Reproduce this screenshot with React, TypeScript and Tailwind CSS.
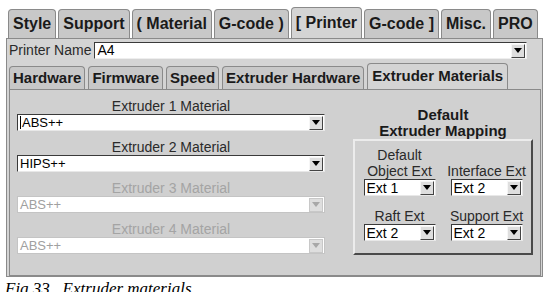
import React from "react";

const topTabs = ["Style", "Support", "( Material", "G-code )", "[ Printer", "G-code ]", "Misc.", "PRO"];
const subTabs = ["Hardware", "Firmware", "Speed", "Extruder Hardware", "Extruder Materials"];

function Arrow({ disabled }: { disabled?: boolean }) {
  return (
    <div
      className={
        "flex h-[14px] w-[14px] items-center justify-center border bg-[#dedede] " +
        (disabled ? "border-[#c8c8c8]" : "border-t-[#f6f6f6] border-l-[#f6f6f6] border-b-[#444] border-r-[#444]")
      }
    >
      <svg width="8" height="5" viewBox="0 0 8 5">
        <path d="M0 0h8L4 5z" fill={disabled ? "#a8a8a8" : "#000"} />
      </svg>
    </div>
  );
}

function Combo({ value, disabled, width, size, caret }: { value: string; disabled?: boolean; width: string; size: string; caret?: boolean }) {
  return (
    <div
      className={
        "flex h-[17px] items-center justify-between bg-white pl-[2px] pr-[1px] " +
        width +
        " " +
        size +
        (disabled
          ? " border border-[#c4c4c4] text-[#a0a0a0]"
          : " border border-t-[#3a3a3a] border-l-[#3a3a3a] border-b-[#e8e8e8] border-r-[#e8e8e8] text-black")
      }
    >
      <span className="flex items-center leading-none">
        {caret && <span className="mr-[1px] h-[13px] w-px bg-black" />}
        {value}
      </span>
      <Arrow disabled={disabled} />
    </div>
  );
}

function Tab({ label, active, big }: { label: string; active?: boolean; big?: boolean }) {
  const size = big
    ? active
      ? " h-[31px] text-[16px] px-[4px]"
      : " h-[29px] text-[16px] px-[4px]"
    : active
      ? " h-[26px] text-[15px] px-[4px]"
      : " h-[23px] text-[15px] px-[3px]";
  return (
    <div
      className={
        "flex items-center rounded-t-[4px] border border-b-0 border-[#8a8a8a] font-bold text-[#1a1a1a]" +
        size +
        (active ? " bg-[#d4d4d4]" : " bg-[#c8c8c8]")
      }
    >
      {label}
    </div>
  );
}

export default function App() {
  return (
    <div className="relative h-[292px] w-[557px] overflow-hidden bg-white font-['Liberation_Sans',Arial,sans-serif]">
      <div className="pl-[6px] pt-[7px]">
        <div className="flex items-end gap-[2px] pl-[2px]">
          {topTabs.map((t) => (
            <Tab key={t} label={t} big active={t === "[ Printer"} />
          ))}
        </div>
        <div className="flex h-[239px] w-[537px] flex-col border border-[#8a8a8a] bg-[#d4d4d4] pl-[2px] pt-[3px]">
          <div className="flex h-[17px] items-center">
            <span className="mr-[3px] text-[14px] text-[#2a2a2a]">Printer Name</span>
            <div className="flex h-[17px] w-[433px] items-center justify-between border border-t-[#3a3a3a] border-l-[#3a3a3a] border-b-[#eee] border-r-[#eee] bg-white pl-[2px] pr-[1px] text-[14px]">
              A4
              <Arrow />
            </div>
          </div>
          <div className="mt-[4px] flex items-end gap-[3px]">
            {subTabs.map((t) => (
              <Tab key={t} label={t} active={t === "Extruder Materials"} />
            ))}
          </div>
          <div className="flex w-[532px] flex-1 border border-[#8a8a8a] bg-[#d0d0d0] pl-[7px] pt-[8px]">
            <div className="flex w-[308px] flex-col">
              {["ABS++", "HIPS++", "ABS++", "ABS++"].map((v, i) => (
                <div key={i} className="mb-[8px] flex flex-col">
                  <div className={"h-[16px] text-center text-[14px] leading-[16px] " + (i > 1 ? "text-[#a4a4a4]" : "text-[#2a2a2a]")}>
                    Extruder {i + 1} Material
                  </div>
                  <Combo value={v} disabled={i > 1} width="w-[308px]" size="text-[13px]" caret={i === 0} />
                </div>
              ))}
            </div>
            <div className="ml-[28px] flex flex-col">
              <div className="mt-[9px] text-center text-[15px] font-bold leading-[16px] text-[#1a1a1a]">
                Default
                <br />
                Extruder Mapping
              </div>
              <div className="grid h-[116px] w-[180px] grid-cols-2 content-start gap-x-[14px] border-2 border-t-[#ececec] border-l-[#ececec] border-b-[#4a4a4a] border-r-[#4a4a4a] pl-[8px] pr-[8px] pt-[6px]">
                <div className="flex flex-col items-center">
                  <div className="text-center text-[14px] leading-[16px] text-[#2a2a2a]">
                    Default
                    <br />
                    Object Ext
                  </div>
                  <Combo value="Ext 1" width="w-[72px]" size="text-[14px]" />
                </div>
                <div className="flex flex-col items-center justify-end">
                  <div className="whitespace-nowrap text-[14px] leading-[16px] text-[#2a2a2a]">Interface Ext</div>
                  <Combo value="Ext 2" width="w-[72px]" size="text-[14px]" />
                </div>
                <div className="mt-[12px] flex flex-col items-center">
                  <div className="text-[14px] leading-[16px] text-[#2a2a2a]">Raft Ext</div>
                  <Combo value="Ext 2" width="w-[72px]" size="text-[14px]" />
                </div>
                <div className="mt-[12px] flex flex-col items-center">
                  <div className="whitespace-nowrap text-[14px] leading-[16px] text-[#2a2a2a]">Support Ext</div>
                  <Combo value="Ext 2" width="w-[72px]" size="text-[14px]" />
                </div>
              </div>
            </div>
          </div>
        </div>
      </div>
      <div className="whitespace-pre pl-[5px] pt-[3px] font-['Liberation_Serif',serif] text-[17px] italic leading-none text-black">
        {"Fig 33.  Extruder materials"}
      </div>
    </div>
  );
}
